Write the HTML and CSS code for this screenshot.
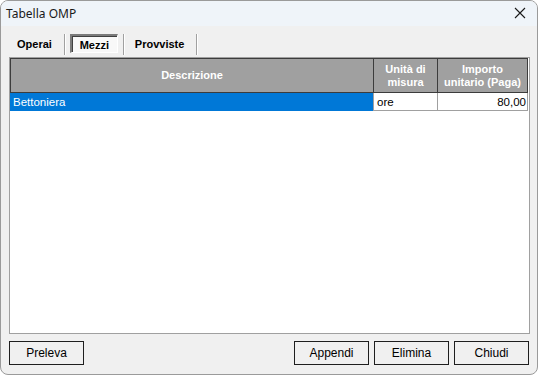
FILE: index.html
```html
<!DOCTYPE html>
<html lang="it">
<head>
    <meta charset="UTF-8">
    <title>Tabella OMP</title>
    <link rel="stylesheet" href="styles.css">
</head>
<body>
    <div class="window">
        <!-- Title bar -->
        <div class="titlebar">
            <span class="title">Tabella OMP</span>
            <svg class="close" width="12" height="12" viewBox="0 0 12 12">
                <path d="M1 1 L11 11 M11 1 L1 11" stroke="#1a1a1a" stroke-width="1.1" fill="none"/>
            </svg>
        </div>

        <!-- Tabs -->
        <div class="tabs">
            <span class="tab first">Operai</span>
            <span class="sep"></span>
            <span class="tab active">Mezzi</span>
            <span class="sep"></span>
            <span class="tab">Provviste</span>
            <span class="sep"></span>
        </div>

        <!-- Grid -->
        <div class="grid">
            <table>
                <colgroup>
                    <col class="col-desc">
                    <col class="col-unit">
                    <col class="col-price">
                </colgroup>
                <thead>
                    <tr>
                        <th>Descrizione</th>
                        <th>Unità di<br>misura</th>
                        <th class="last">Importo<br>unitario (Paga)</th>
                    </tr>
                </thead>
                <tbody>
                    <tr>
                        <td class="selected">Bettoniera</td>
                        <td>ore</td>
                        <td class="num last">80,00</td>
                    </tr>
                </tbody>
            </table>
        </div>

        <!-- Buttons -->
        <div class="buttons">
            <button>Preleva</button>
            <span class="spacer"></span>
            <button>Appendi</button>
            <button>Elimina</button>
            <button>Chiudi</button>
        </div>
    </div>
</body>
</html>
```

FILE: styles.css
```css
html, body {
    margin: 0;
    padding: 0;
    background-color: #ffffff;
}

.window {
    width: 538px;
    height: 375px;
    box-sizing: border-box;
    border: 1px solid #9a9a9a;
    border-radius: 8px;
    background-color: #f0f0f0;
    display: flex;
    flex-direction: column;
    overflow: hidden;
    font-family: "Liberation Sans", Arial, sans-serif;
    font-size: 11px;
    color: #000;
}

.titlebar {
    height: 25px;
    flex: none;
    display: flex;
    align-items: center;
    justify-content: space-between;
    padding: 0 11px 0 5px;
    background-color: #eff4f9;
    font-family: "Noto Sans", "Open Sans", sans-serif;
    font-size: 12px;
    color: #1a1a1a;
}

.title {
    margin-top: -1px;
}

.close {
    margin-top: -1px;
}

.tabs {
    height: 22px;
    flex: none;
    margin-top: 7px;
    padding-left: 7px;
    display: flex;
    align-items: stretch;
    font-weight: bold;
    font-size: 11px;
}

.tab {
    display: flex;
    align-items: center;
    padding: 0 12px 0 10px;
}

.tab.first {
    padding-left: 9px;
}

.tab.active {
    box-sizing: border-box;
    width: 48px;
    justify-content: center;
    margin: 1px 5px 2px 4px;
    padding: 2px 0 0 0;
    border-top: 2px solid #7a7a7a;
    border-left: 2px solid #7a7a7a;
    border-right: 1px solid #ffffff;
    border-bottom: 1px solid #ffffff;
    background-color: #f8f8f8;
    box-shadow: inset 1px 1px 0 #404040;
}

.sep {
    width: 1px;
    margin-top: 1px;
    background-color: #a0a0a0;
    border-right: 1px solid #ffffff;
}

.grid {
    flex: 1;
    margin: 2px 7px 0 8px;
    border: 1px solid #a0a0a0;
    background-color: #ffffff;
}

table {
    width: 518px;
    table-layout: fixed;
    border-collapse: separate;
    border-spacing: 0;
}

.col-desc { width: 363px; }
.col-unit { width: 64px; }
.col-price { width: 91px; }

th {
    height: 33px;
    padding: 0 2px;
    background-color: #a0a0a0;
    color: #ffffff;
    font-weight: bold;
    font-size: 11px;
    line-height: 13px;
    text-align: center;
    border-top: 1px solid #3c3c3c;
    border-bottom: 1px solid #3c3c3c;
    border-left: 1px solid #3c3c3c;
}

th.last {
    border-right: 1px solid #3c3c3c;
}

td {
    height: 17px;
    padding: 0 2px 0 3px;
    font-size: 11.5px;
    border-bottom: 1px solid #a0a0a0;
    border-left: 1px solid #a0a0a0;
    white-space: nowrap;
}

td.last {
    border-right: 1px solid #a0a0a0;
}

td.selected {
    background-color: #0078d7;
    color: #ffffff;
    border-left: none;
    border-bottom-color: #0078d7;
    padding-left: 3px;
}

td.num {
    text-align: right;
    padding-right: 1px;
}

.buttons {
    flex: none;
    display: flex;
    gap: 5px;
    padding: 7px 8px 9px 8px;
}

.spacer {
    flex: 1;
}

button {
    width: 75px;
    height: 24px;
    padding: 0;
    margin: 0;
    background-color: #f0f0f0;
    border: 1px solid #1e1e1e;
    border-radius: 0;
    font-family: "Liberation Sans", Arial, sans-serif;
    font-size: 12px;
    color: #000;
}
```
